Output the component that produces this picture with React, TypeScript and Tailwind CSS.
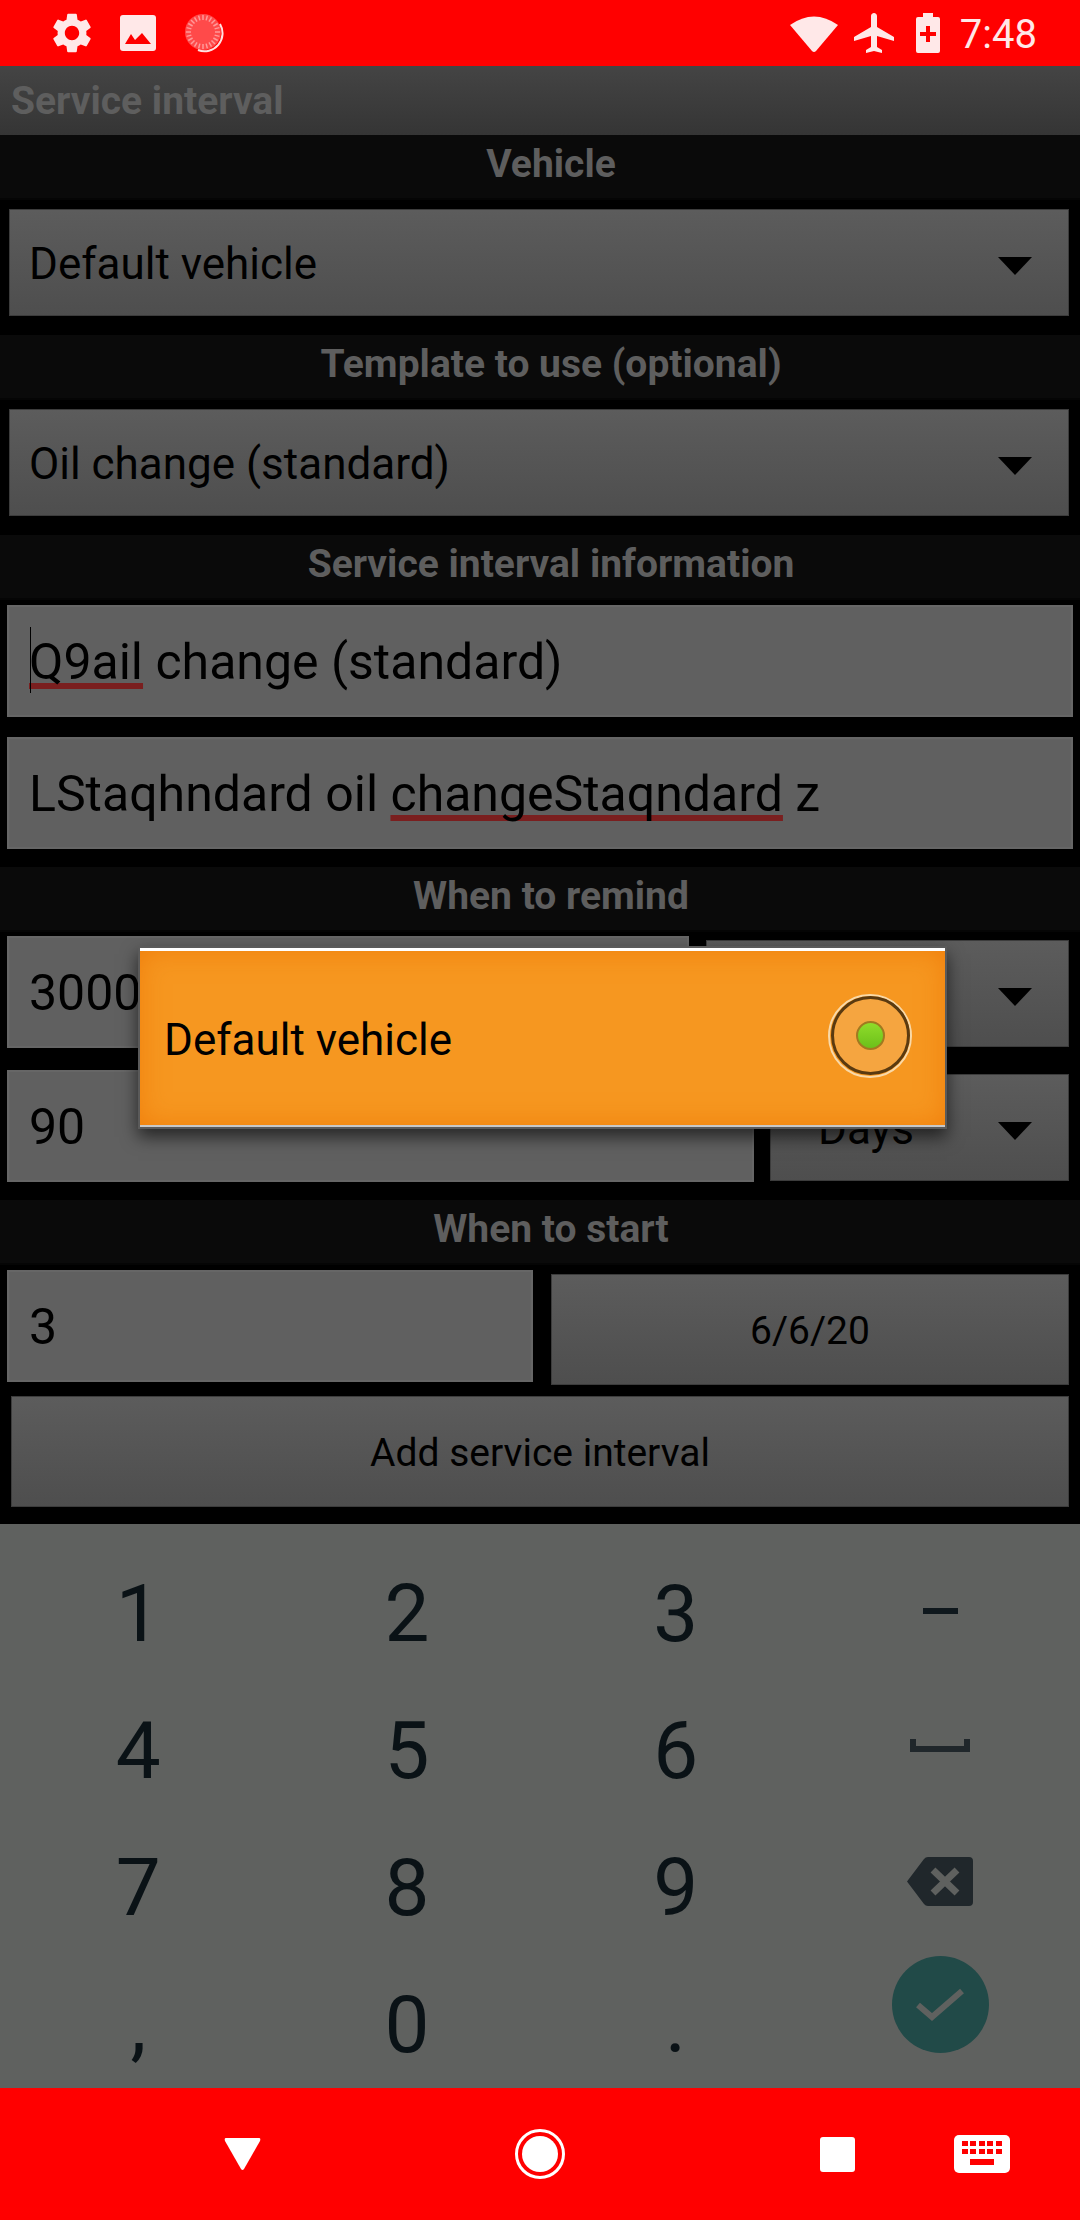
import { MdSettings, MdAirplanemodeActive } from 'react-icons/md';

const roboto = "font-['Roboto',sans-serif]";

function Header({ title, className = '' }: { title: string; className?: string }) {
  return (
    <div className={`h-[65px] bg-[#0a0a0a] border-b-2 border-[#050505] flex items-center justify-center pl-[22px] pb-[5px] text-[39px] font-bold text-[#5e5e5e] ${className}`}>
      {title}
    </div>
  );
}

function Arrow() {
  return <div className="mt-[6px] w-0 h-0 border-l-[17px] border-r-[17px] border-t-[18px] border-l-transparent border-r-transparent border-t-black" />;
}

function Spinner({ label, className = '' }: { label?: string; className?: string }) {
  return (
    <div className={`h-[107px] bg-gradient-to-b from-[#5c5c5c] to-[#4e4e4e] border border-[#3c3c3c] flex items-center justify-between pl-[19px] pr-[36px] text-[44px] text-black ${className}`}>
      <span className="pt-[2px]">{label}</span>
      <Arrow />
    </div>
  );
}

function Edit({ children, className = '' }: { children: React.ReactNode; className?: string }) {
  return (
    <div className={`h-[112px] bg-[#606060] border-2 border-[#666666] flex items-center pl-[20px] pt-[3px] text-[50px] text-black ${className}`}>
      {children}
    </div>
  );
}

function Squiggle({ children }: { children: string }) {
  return <span className="underline decoration-[#7a1f1f] decoration-[6px] underline-offset-[4px] [text-decoration-skip-ink:none]">{children}</span>;
}

const keys = ['1', '2', '3', '4', '5', '6', '7', '8', '9', ',', '0', '.'];

function Keyboard() {
  return (
    <div className="h-[564px] bg-[#5f615f] flex pl-[4px] overflow-hidden">
      <div className="w-[806px] grid grid-cols-3 grid-rows-[repeat(4,137px)] pt-[21px]">
        {keys.map((k) => (
          <div key={k} className="flex items-center justify-center text-[80px] text-[#0a1216]">
            {k}
          </div>
        ))}
      </div>
      <div className="flex-1 flex flex-col items-center pr-[10px]">
        <div className="h-[90px] flex items-end">
          <div className="w-[35px] h-[6px] bg-[#0f181d]" />
        </div>
        <div className="mt-[125px] w-[60px] h-[13px] border-[6px] border-t-0 border-[#20272b]" />
        <svg viewBox="0 0 66 49" className="mt-[105px] w-[66px] h-[49px]">
          <path d="M0 24.500L17 2Q18.500 0 21 0H62Q66 0 66 4V45Q66 49 62 49H21Q18.500 49 17 47Z" fill="#20272b" />
          <path d="M26 13L50 36M50 13L26 36" stroke="#5f615f" strokeWidth="7" />
        </svg>
        <div className="mt-[50px] w-[97px] h-[97px] rounded-full bg-[#214a48] flex items-center justify-center">
          <svg viewBox="0 0 48 34" className="w-[48px] h-[34px]">
            <path d="M2 17L16 29L46 3" fill="none" stroke="#5f615f" strokeWidth="6" />
          </svg>
        </div>
      </div>
    </div>
  );
}

const ticks = Array.from({ length: 24 }, (_, i) => (i * 360) / 24);

function StatusBar() {
  return (
    <div className={`h-[66px] bg-[#ff0000] flex items-center justify-between pl-[48px] pr-[43px] ${roboto}`}>
      <div className="flex items-center">
        <MdSettings className="w-[48px] h-[48px] text-[#ffe8e8]" />
        <svg viewBox="0 0 36 36" className="ml-[24px] w-[36px] h-[36px]">
          <path d="M3 0H33Q36 0 36 3V33Q36 36 33 36H3Q0 36 0 33V3Q0 0 3 0Z" fill="#ffe8e8" />
          <path d="M5 29L11 19L15 25L22 18L31 29Z" fill="#ff0000" />
        </svg>
        <svg viewBox="0 0 40 40" className="ml-[28px] w-[40px] h-[40px]">
          <circle cx="19" cy="19" r="18" fill="#ff4a4a" />
          {ticks.map((a) => (
            <path key={a} d="M19 2V7" stroke="#ff9a9a" strokeWidth="1.500" transform={`rotate(${a} 19 19)`} />
          ))}
          <path d="M36 11A18 18 0 0 1 14 37" fill="none" stroke="#ffe0e0" strokeWidth="2" />
        </svg>
      </div>
      <div className="flex items-center text-[#ffe8e8]">
        <svg viewBox="0 0 48 38" className="w-[48px] h-[38px]">
          <path d="M0 11Q24 -6 48 11L26 37Q24 39 22 37Z" fill="#ffe8e8" />
        </svg>
        <MdAirplanemodeActive className="w-[48px] h-[48px] ml-[12px]" />
        <svg viewBox="0 0 24 40" className="w-[24px] h-[40px] ml-[18px]">
          <path d="M7 0H17V4H22Q24 4 24 6V38Q24 40 22 40H2Q0 40 0 38V6Q0 4 2 4H7Z" fill="#ffe8e8" />
          <path d="M10 13H14V19H20V23H14V29H10V23H4V19H10Z" fill="#ff0000" />
        </svg>
        <span className="ml-[20px] pt-[3px] text-[40px] leading-none">7:48</span>
      </div>
    </div>
  );
}

function NavBar() {
  return (
    <div className="h-[132px] bg-[#ff0000] relative flex items-center">
      <svg viewBox="0 0 37 32" className="w-[37px] h-[32px] ml-[224px]">
        <path d="M2 0H35Q37 0 36 3L20 31Q18.500 33 17 31L1 3Q0 0 2 0Z" fill="white" />
      </svg>
      <div className="ml-[254px] w-[50px] h-[50px] rounded-full border-[3px] border-white flex items-center justify-center">
        <div className="w-[36px] h-[36px] rounded-full bg-white" />
      </div>
      <div className="ml-[255px] w-[35px] h-[35px] rounded-[3px] bg-white" />
      <svg viewBox="0 0 56 38" className="ml-[99px] w-[56px] h-[38px]">
        <rect width="56" height="38" rx="5" fill="white" />
        <path d="M8 6h6v5H8zM16 6h6v5h-6zM25 6h6v5h-6zM33 6h6v5h-6zM42 6h6v5h-6zM8 14h6v5H8zM16 14h6v5h-6zM25 14h6v5h-6zM33 14h6v5h-6zM42 14h6v5h-6zM16 24h24v6H16z" fill="#ff0000" />
      </svg>
    </div>
  );
}

export default function App() {
  return (
    <div className={`w-[1080px] h-[2220px] bg-black relative overflow-hidden ${roboto}`}>
      <StatusBar />
      <div className="h-[69px] bg-gradient-to-b from-[#444444] to-[#353535] flex items-center pl-[11px] pt-[2px] text-[39px] font-bold text-[#5e5e5e]">
        Service interval
      </div>

      <Header title="Vehicle" />
      <Spinner label="Default vehicle" className="mt-[9px] ml-[9px] w-[1060px]" />

      <Header title="Template to use (optional)" className="mt-[19px]" />
      <Spinner label="Oil change (standard)" className="mt-[9px] ml-[9px] w-[1060px]" />

      <Header title="Service interval information" className="mt-[19px]" />
      <Edit className="mt-[5px] mx-[7px] relative">
        <div className="absolute left-[21px] top-[20px] w-[1px] h-[66px] bg-black" />
        <Squiggle>Q9ail</Squiggle>&nbsp;change (standard)
      </Edit>
      <Edit className="mt-[20px] mx-[7px]">
        LStaqhndard oil&nbsp;<Squiggle>changeStaqndard</Squiggle>&nbsp;z
      </Edit>

      <Header title="When to remind" className="mt-[18px]" />
      <div className="flex items-start mt-[4px] pl-[7px]">
        <Edit className="w-[682px]">3000</Edit>
        <Spinner className="w-[363px] ml-[17px] mt-[4px]" />
      </div>
      <div className="flex items-start mt-[22px] pl-[7px]">
        <Edit className="w-[747px]">90</Edit>
        <Spinner label="Days" className="w-[299px] ml-[16px] mt-[4px] !pl-[47px]" />
      </div>

      <Header title="When to start" className="mt-[18px]" />
      <div className="flex items-start mt-[5px] pl-[7px]">
        <Edit className="w-[526px]">3</Edit>
        <div className="w-[518px] h-[111px] ml-[18px] mt-[4px] pt-[3px] bg-gradient-to-b from-[#5c5c5c] to-[#4e4e4e] border border-[#3c3c3c] flex items-center justify-center text-[39px] text-black">
          6/6/20
        </div>
      </div>
      <div className="w-[1058px] h-[111px] ml-[11px] mt-[11px] pt-[3px] bg-gradient-to-b from-[#5c5c5c] to-[#4e4e4e] border border-[#3c3c3c] flex items-center justify-center text-[39px] text-black">
        Add service interval
      </div>

      <div className="mt-[17px]">
        <Keyboard />
      </div>
      <NavBar />

      <div className="absolute left-[138px] top-[946px] w-[809px] h-[183px] border-2 border-[#5a5a5a] shadow-[0_8px_16px_rgba(0,0,0,0.6)]">
        <div className="h-full border-t-[3px] border-b-2 border-t-white border-b-[#c8c8c8] bg-[#f69720] shadow-[inset_0_0_28px_#f07f0c] flex items-center justify-between pl-[24px] pr-[33px] text-[44px] text-black">
          <span className="pt-[4px]">Default vehicle</span>
          <div className="mb-[5px] w-[84px] h-[84px] rounded-full border-[2px] border-[#f9d9a8] flex items-center justify-center">
            <div className="w-[79px] h-[79px] rounded-full border-[3px] border-[#5a3a10] bg-[#f5a540] flex items-center justify-center">
              <div className="w-[29px] h-[29px] rounded-full bg-gradient-to-b from-[#8fdc2a] to-[#6cc01a] border-2 border-[#a07a20]" />
            </div>
          </div>
        </div>
      </div>
    </div>
  );
}
